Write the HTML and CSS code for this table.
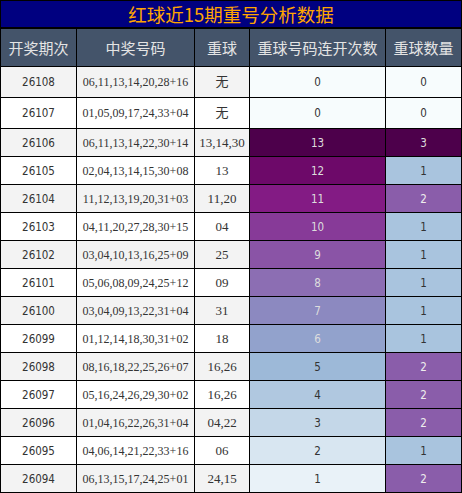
FILE: index.html
```html
<!DOCTYPE html>
<html lang="zh-CN">
<head>
    <meta charset="UTF-8">
    <meta name="viewport" content="width=device-width, initial-scale=1.0">
    <title>红球近15期重号分析数据</title>
    <link rel="stylesheet" href="styles.css">
</head>
<body>
    <table class="report">
        <colgroup>
            <col class="colIssue">
            <col class="colBalls">
            <col class="colRepeat">
            <col class="colRun">
            <col class="colCount">
        </colgroup>
        <thead>
            <tr>
                <th class="title" colspan="5">红球近15期重号分析数据</th>
            </tr>
            <tr class="head">
                <th>开奖期次</th>
                <th>中奖号码</th>
                <th>重球</th>
                <th>重球号码连开次数</th>
                <th>重球数量</th>
            </tr>
        </thead>
        <tbody>
            <tr class="odd tall">
                <td class="num">26108</td>
                <td class="balls">06,11,13,14,20,28+16</td>
                <td class="repeat">无</td>
                <td class="num" style="background:#f7fcfd;color:#333">0</td>
                <td class="num" style="background:#f7fcfd;color:#333">0</td>
            </tr>
            <tr class="tall">
                <td class="num">26107</td>
                <td class="balls">01,05,09,17,24,33+04</td>
                <td class="repeat">无</td>
                <td class="num" style="background:#f7fcfd;color:#333">0</td>
                <td class="num" style="background:#f7fcfd;color:#333">0</td>
            </tr>
            <tr class="odd">
                <td class="num">26106</td>
                <td class="balls">06,11,13,14,22,30+14</td>
                <td class="repeat">13,14,30</td>
                <td class="num" style="background:#4d004b;color:#ddd">13</td>
                <td class="num" style="background:#4d004b;color:#ddd">3</td>
            </tr>
            <tr>
                <td class="num">26105</td>
                <td class="balls">02,04,13,14,15,30+08</td>
                <td class="repeat">13</td>
                <td class="num" style="background:#6d0969;color:#ddd">12</td>
                <td class="num" style="background:#a9c4de;color:#333">1</td>
            </tr>
            <tr class="odd">
                <td class="num">26104</td>
                <td class="balls">11,12,13,19,20,31+03</td>
                <td class="repeat">11,20</td>
                <td class="num" style="background:#831b84;color:#ddd">11</td>
                <td class="num" style="background:#8a5daa;color:#eee">2</td>
            </tr>
            <tr>
                <td class="num">26103</td>
                <td class="balls">04,11,20,27,28,30+15</td>
                <td class="repeat">04</td>
                <td class="num" style="background:#873a98;color:#ddd">10</td>
                <td class="num" style="background:#a9c4de;color:#333">1</td>
            </tr>
            <tr class="odd">
                <td class="num">26102</td>
                <td class="balls">03,04,10,13,16,25+09</td>
                <td class="repeat">25</td>
                <td class="num" style="background:#8a54a6;color:#ddd">9</td>
                <td class="num" style="background:#a9c4de;color:#333">1</td>
            </tr>
            <tr>
                <td class="num">26101</td>
                <td class="balls">05,06,08,09,24,25+12</td>
                <td class="repeat">09</td>
                <td class="num" style="background:#8c6eb3;color:#ddd">8</td>
                <td class="num" style="background:#a9c4de;color:#333">1</td>
            </tr>
            <tr class="odd">
                <td class="num">26100</td>
                <td class="balls">03,04,09,13,22,31+04</td>
                <td class="repeat">31</td>
                <td class="num" style="background:#8c89c0;color:#ddd">7</td>
                <td class="num" style="background:#a9c4de;color:#333">1</td>
            </tr>
            <tr>
                <td class="num">26099</td>
                <td class="balls">01,12,14,18,30,31+02</td>
                <td class="repeat">18</td>
                <td class="num" style="background:#92a2cc;color:#ddd">6</td>
                <td class="num" style="background:#a9c4de;color:#333">1</td>
            </tr>
            <tr class="odd">
                <td class="num">26098</td>
                <td class="balls">08,16,18,22,25,26+07</td>
                <td class="repeat">16,26</td>
                <td class="num" style="background:#9db9d8;color:#333">5</td>
                <td class="num" style="background:#8a5daa;color:#eee">2</td>
            </tr>
            <tr>
                <td class="num">26097</td>
                <td class="balls">05,16,24,26,29,30+02</td>
                <td class="repeat">16,26</td>
                <td class="num" style="background:#b0c8e0;color:#333">4</td>
                <td class="num" style="background:#8a5daa;color:#eee">2</td>
            </tr>
            <tr class="odd">
                <td class="num">26096</td>
                <td class="balls">01,04,16,22,26,31+04</td>
                <td class="repeat">04,22</td>
                <td class="num" style="background:#c4d7e8;color:#333">3</td>
                <td class="num" style="background:#8a5daa;color:#eee">2</td>
            </tr>
            <tr>
                <td class="num">26095</td>
                <td class="balls">04,06,14,21,22,33+16</td>
                <td class="repeat">06</td>
                <td class="num" style="background:#d8e6f1;color:#333">2</td>
                <td class="num" style="background:#a9c4de;color:#333">1</td>
            </tr>
            <tr class="odd">
                <td class="num">26094</td>
                <td class="balls">06,13,15,17,24,25+01</td>
                <td class="repeat">24,15</td>
                <td class="num" style="background:#e9f2f8;color:#333">1</td>
                <td class="num" style="background:#8a5daa;color:#eee">2</td>
            </tr>
        </tbody>
    </table>
</body>
</html>
```

FILE: styles.css
```css
/* Page */
html, body {
    margin: 0;
    padding: 0;
    background-color: #fff;
}

/* Table */
.report {
    width: 462px;
    border-collapse: collapse;
    table-layout: fixed;
    font-family: "Liberation Serif", "Noto Sans CJK SC", serif;
    color: #333;
}
.colIssue { width: 76px; }
.colBalls { width: 118px; }
.colRepeat { width: 55px; }
.colRun { width: 136px; }
.colCount { width: 76px; }

.report th,
.report td {
    border: 1px solid #000;
    padding: 0;
    text-align: center;
    vertical-align: middle;
    white-space: nowrap;
    overflow: hidden;
}

/* Title and header */
.title {
    height: 26px;
    background-color: #000080;
    color: #ffa500;
    font-family: "Noto Sans CJK SC", sans-serif;
    font-size: 18.5px;
    font-weight: normal;
    line-height: 26px;
    border-bottom-width: 2px !important;
}
.head th {
    height: 37px;
    background-color: #44546a;
    color: #e4e4e4;
    font-family: "Noto Sans CJK SC", sans-serif;
    font-size: 15px;
    font-weight: normal;
    line-height: 20px;
}

/* Rows */
.report td {
    height: 27px;
    line-height: 16px;
    background-color: #fff;
}
.report tr.odd td {
    background-color: #f3f3f3;
}
.report tr.tall td {
    height: 30px;
}
.num {
    font-family: "DejaVu Sans", sans-serif;
    font-stretch: condensed;
    font-size: 11.5px;
}
.balls {
    font-size: 12px;
}
.repeat {
    font-size: 13px;
}
```
